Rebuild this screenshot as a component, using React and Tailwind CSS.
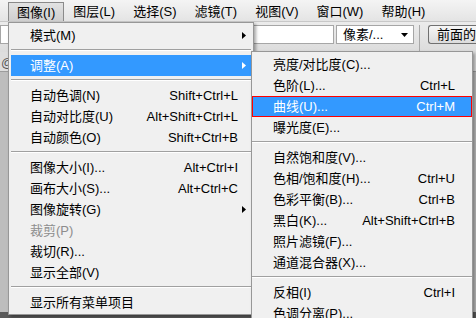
import React from "react";

const Arrow = ({ white }) => (
  <svg className="absolute right-[5px] top-[7px]" width="4" height="7" viewBox="0 0 4 7">
    <polygon points="0,0 4,3.5 0,7" fill={white ? "#ffffff" : "#000000"} />
  </svg>
);

const MItem = ({ label, shortcut, arrow, hl, disabled }) => (
  <div
    className={
      "relative flex h-[21px] items-center pl-[19px] pr-[13px] " +
      (hl ? "bg-[#3399ff] text-white" : disabled ? "text-[#8d8d8d]" : "text-black")
    }
  >
    <span className="flex-1 whitespace-nowrap">{label}</span>
    {shortcut && <span className="whitespace-nowrap">{shortcut}</span>}
    {arrow && <Arrow white={hl} />}
  </div>
);

const SItem = ({ label, shortcut, hl }) => (
  <div
    className={
      "flex h-[21px] items-center pl-[20px] pr-[16px] " +
      (hl ? "border border-[#ff0000] bg-[#3399ff] text-white" : "border border-transparent text-black")
    }
  >
    <span className="flex-1 whitespace-nowrap">{label}</span>
    {shortcut && <span className="whitespace-nowrap">{shortcut}</span>}
  </div>
);

const Sep = () => (
  <div className="h-[9px] pt-[3px]">
    <div className="h-px bg-[#a0a0a0]" />
    <div className="h-px bg-white" />
  </div>
);

export default function App() {
  const bar = ["图像(I)", "图层(L)", "选择(S)", "滤镜(T)", "视图(V)", "窗口(W)", "帮助(H)"];
  return (
    <div className="relative flex h-[318px] w-[476px] flex-col overflow-hidden bg-[#c4c4c4] font-['Liberation_Sans','Noto_Sans_CJK_SC',sans-serif] text-[13px] leading-[21px] text-black">
      {/* menu bar */}
      <div className="flex h-[22px] items-end border-b border-[#c8c8c8] bg-gradient-to-b from-[#f4f4f4] to-[#e4e4e4] pl-[8px]">
        {bar.map((t, i) => (
          <div
            key={t}
            className={
              "flex h-[19px] items-center px-[8px] " +
              (i === 0 ? "border border-b-0 border-[#8a8a8a] bg-gradient-to-b from-[#e2e2e2] to-[#cfcfcf]" : "border border-transparent")
            }
          >
            {t}
          </div>
        ))}
      </div>
      {/* options bar */}
      <div className="flex h-[30px] items-start overflow-hidden bg-gradient-to-b from-[#ececec] to-[#dcdcdc] pt-[3px]">
        <div className="h-[19px] w-[334px] shrink-0 border border-[#a6a6a6] bg-white" />
        <div className="ml-[2px] flex h-[19px] w-[78px] shrink-0 items-center border border-[#a6a6a6] bg-white pl-[6px] pr-[5px]">
          <span className="flex-1 whitespace-nowrap">像素/...</span>
          <svg width="7" height="4" viewBox="0 0 7 4">
            <polygon points="0,0 7,0 3.5,4" fill="#000" />
          </svg>
        </div>
        <div className="ml-[5px] h-[27px] w-px shrink-0 bg-[#a8a8a8]" />
        <div className="ml-[8px] flex h-[19px] w-[80px] shrink-0 items-center rounded-l-[3px] border border-r-0 border-[#707070] bg-gradient-to-b from-[#f6f6f6] to-[#dcdcdc] pl-[8px] whitespace-nowrap">
          前面的图像
        </div>
      </div>
      {/* workspace */}
      <div className="flex flex-1 flex-col">
        <div className="h-[20px] border-b border-[#9c9c9c] bg-[#dedede] pl-[1px] text-[#555]">@</div>
        <div className="flex-1 bg-[#bdbdbd]" />
        <div className="h-[6px] bg-[#5a5a5a]" />
      </div>

      {/* main dropdown menu */}
      <div className="absolute left-[8px] top-[22px] w-[246px] border border-[#979797] bg-[#f0f0f0] px-[2px] pt-[2px] pb-[1px] shadow-[2px_2px_3px_rgba(0,0,0,0.35)]">
        <MItem label="模式(M)" arrow />
        <Sep />
        <MItem label="调整(A)" arrow hl />
        <Sep />
        <MItem label="自动色调(N)" shortcut="Shift+Ctrl+L" />
        <MItem label="自动对比度(U)" shortcut="Alt+Shift+Ctrl+L" />
        <MItem label="自动颜色(O)" shortcut="Shift+Ctrl+B" />
        <Sep />
        <MItem label="图像大小(I)..." shortcut="Alt+Ctrl+I" />
        <MItem label="画布大小(S)..." shortcut="Alt+Ctrl+C" />
        <MItem label="图像旋转(G)" arrow />
        <MItem label="裁剪(P)" disabled />
        <MItem label="裁切(R)..." />
        <MItem label="显示全部(V)" />
        <Sep />
        <MItem label="显示所有菜单项目" />
      </div>

      {/* submenu */}
      <div className="absolute left-[251px] top-[51px] w-[222px] border border-[#979797] bg-[#f0f0f0] pt-[2px] shadow-[2px_2px_3px_rgba(0,0,0,0.35)]">
        <SItem label="亮度/对比度(C)..." />
        <SItem label="色阶(L)..." shortcut="Ctrl+L" />
        <SItem label="曲线(U)..." shortcut="Ctrl+M" hl />
        <SItem label="曝光度(E)..." />
        <Sep />
        <SItem label="自然饱和度(V)..." />
        <SItem label="色相/饱和度(H)..." shortcut="Ctrl+U" />
        <SItem label="色彩平衡(B)..." shortcut="Ctrl+B" />
        <SItem label="黑白(K)..." shortcut="Alt+Shift+Ctrl+B" />
        <SItem label="照片滤镜(F)..." />
        <SItem label="通道混合器(X)..." />
        <Sep />
        <SItem label="反相(I)" shortcut="Ctrl+I" />
        <SItem label="色调分离(P)..." />
      </div>
    </div>
  );
}
